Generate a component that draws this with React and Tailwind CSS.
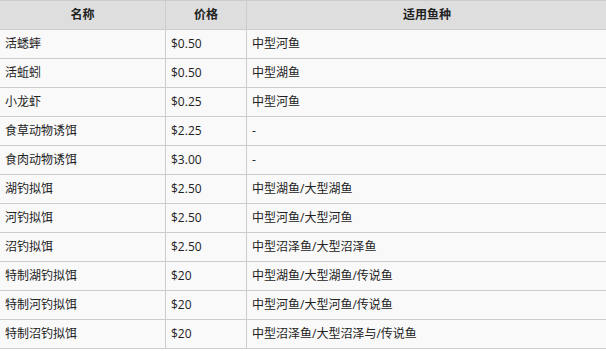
import React from "react";

const rows = [
  ["活蟋蟀", "$0.50", "中型河鱼"],
  ["活蚯蚓", "$0.50", "中型湖鱼"],
  ["小龙虾", "$0.25", "中型河鱼"],
  ["食草动物诱饵", "$2.25", "-"],
  ["食肉动物诱饵", "$3.00", "-"],
  ["湖钓拟饵", "$2.50", "中型湖鱼/大型湖鱼"],
  ["河钓拟饵", "$2.50", "中型河鱼/大型河鱼"],
  ["沼钓拟饵", "$2.50", "中型沼泽鱼/大型沼泽鱼"],
  ["特制湖钓拟饵", "$20", "中型湖鱼/大型湖鱼/传说鱼"],
  ["特制河钓拟饵", "$20", "中型河鱼/大型河鱼/传说鱼"],
  ["特制沼钓拟饵", "$20", "中型沼泽鱼/大型沼泽与/传说鱼"],
];

const App = () => {
  return (
    <div className="w-[606px] h-[351px] overflow-hidden bg-white">
      <table
        className="-ml-px w-[609px] border-collapse table-fixed text-[12px] text-[#222]"
        style={{ fontFamily: '"Open Sans", "Noto Sans CJK SC", sans-serif' }}
      >
        <colgroup>
          <col className="w-[166px]" />
          <col className="w-[81px]" />
          <col />
        </colgroup>
        <thead>
          <tr className="h-[29px] bg-[#dedede]">
            <th className="border border-[#cccccc] font-bold text-center">名称</th>
            <th className="border border-[#cccccc] font-bold text-center">价格</th>
            <th className="border border-[#cccccc] font-bold text-center">适用鱼种</th>
          </tr>
        </thead>
        <tbody>
          {rows.map((r) => (
            <tr key={r[0]} className="h-[29px] bg-[#f9f9f9]">
              {r.map((c, i) => (
                <td key={i} className="border border-[#cccccc] pl-[5px] leading-none">
                  {c}
                </td>
              ))}
            </tr>
          ))}
        </tbody>
      </table>
    </div>
  );
};

export default App;
